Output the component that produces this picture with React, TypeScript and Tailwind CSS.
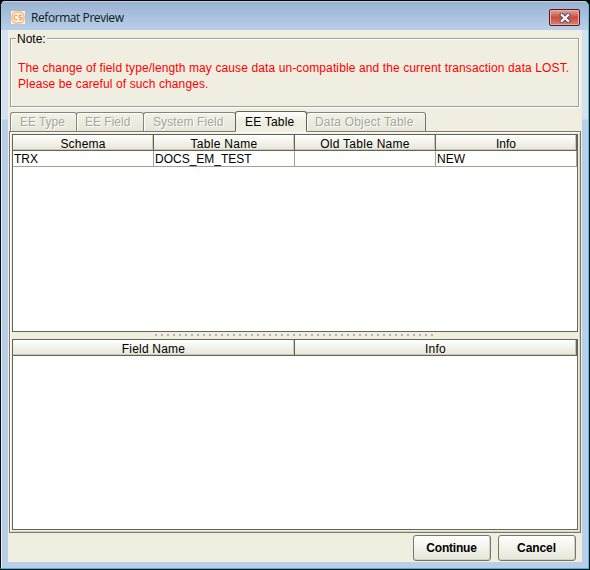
const columns = [
  { name: 'Schema', value: 'TRX', tracking: 'tracking-[0.2px]' },
  { name: 'Table Name', value: 'DOCS_EM_TEST', tracking: 'tracking-[0.3px]' },
  { name: 'Old Table Name', value: '', tracking: 'tracking-[0.26px]' },
  { name: 'Info', value: 'NEW', tracking: 'tracking-[0px]' },
];

const tabs = [
  { name: 'EE Type', size: 'w-[67px] pl-[9px] tracking-[-0.05px]' },
  { name: 'EE Field', size: 'w-[68px] pl-[8px] tracking-[0px]' },
  { name: 'System Field', size: 'w-[93px] pl-[9px] tracking-[0.1px]' },
  { name: 'EE Table', size: 'w-[72px] pl-[9px] tracking-[0.2px]', active: true },
  { name: 'Data Object Table', size: 'w-[120px] pl-[8px] tracking-[0.2px]' },
];

const headerCell =
  'flex h-4 items-center justify-center border-r border-b border-[#656556] bg-linear-to-b from-white to-[#e7e6d8] pt-[2px] shadow-[inset_-1px_-1px_0_#c9c8ba] whitespace-nowrap';

function TitleBar() {
  return (
    <header className="flex h-[28px] shrink-0 items-center bg-linear-to-b from-[#99b3d2] to-[#b9cfe9] pt-[4px] pr-[7px] pl-[10px]">
      <svg width="14" height="13" viewBox="0 0 14 13" className="mt-[-1px]">
        <rect width="14" height="13" fill="#fff4e4" />
        <rect x="1" y="1" width="12" height="11" rx="4.5" fill="none" stroke="#f6b678" strokeWidth="1.4" />
        <path d="M6.3 4.2H4.3L3.2 5.2v2.6l1.1 1h2M11 4.2H8.7L8 5v.9l.7.6h1.6l.7.7v.9l-.7.7H7.8" fill="none" stroke="#ea9345" strokeWidth="1.1" />
      </svg>
      <h1 className="ml-[6px] text-[12px] leading-[14px] tracking-[-0.43px] font-['Open_Sans',sans-serif] text-[#101820]">Reformat Preview</h1>
      <button aria-label="Close" className="mt-[-1px] mr-[1px] ml-auto flex h-[17px] w-[31px] items-center justify-center rounded-[2px] border border-[#501b22] bg-linear-to-b from-[#dfa49a] via-[#c94b39] via-50% to-[#d98274] shadow-[inset_0_0_0_1px_#e8b0a5]">
        <svg width="12" height="10" viewBox="0 0 12 10">
          <path d="M2.8 2l6.4 6M9.2 2L2.8 8" stroke="#4d5266" strokeWidth="4" strokeLinecap="square" />
          <path d="M2.8 2l6.4 6M9.2 2L2.8 8" stroke="#fff" strokeWidth="2.1" strokeLinecap="square" />
        </svg>
      </button>
    </header>
  );
}

function Note() {
  return (
    <section className="relative mt-2 ml-[2px] h-[69px] w-[569px] border border-[#a09f94] pt-[21px] pl-[7px] text-[12px] leading-4 text-[#ff0000] shadow-[1px_1px_0_#fff,inset_1px_1px_0_#fff]">
      <span className="absolute top-[-8px] left-[5px] bg-[#f0eee1] px-[1px] tracking-[0px] text-black">Note:</span>
      <p className="whitespace-nowrap tracking-[0.11px]">The change of field type/length may cause data un-compatible and the current transaction data LOST.</p>
      <p className="whitespace-nowrap tracking-[0.11px]">Please be careful of such changes.</p>
    </section>
  );
}

export default function App() {
  return (
    <div className="h-[570px] w-[590px] bg-black pt-px pr-px pb-px font-['Liberation_Sans',Arial,sans-serif] text-[12px]">
      <div className="flex h-[568px] w-[589px] flex-col overflow-hidden rounded-t-[5px] border-x border-t border-b border-t-[#c3d3e4] border-r-[#25d4ef] border-b-[#16c9e8] border-l-[#111] bg-[#b9cfe9]">
        <TitleBar />
        <div className="min-h-0 flex-1 border-l border-[#e4edf7] bg-linear-to-b from-[#d3e1f1] from-[89px] to-[#b9cfe9] to-[90px] pr-[6px] pb-[6px] pl-[6px]">
          <main className="flex h-[532px] w-[574px] flex-col bg-[#f0eee1]">
            <Note />
            <div className="mt-[4px] ml-[2px] flex h-[20px] items-end" role="tablist">
              {tabs.map((tab) => (
                <div
                  key={tab.name}
                  role="tab"
                  className={`${tab.size} -mr-px shrink-0 rounded-t-[3px] border whitespace-nowrap ${tab.active ? 'relative z-10 mb-[-1px] h-[21px] border-[#656556] border-b-[#f0eee1] bg-linear-to-b from-white to-[#f0eee1] to-50% pt-[3px] leading-[14px] text-black' : 'h-[19px] border-[#85847a] border-b-0 border-r-[#77766a] bg-linear-to-b from-[#f2f1e6] to-[#e6e5d8] pt-[2px] leading-[14px] text-[#a7a69b] shadow-[inset_1px_1px_0_#fff] [text-shadow:1px_1px_0_#fff]'}`}
                >
                  {tab.name}
                </div>
              ))}
            </div>
            <section className="ml-px flex h-[402px] w-[572px] shrink-0 flex-col border border-[#7a7969] bg-[#f0eee1] px-[2px] pt-[2px] pb-[2px] shadow-[inset_1px_1px_0_#fff,inset_-1px_-1px_0_#d5d3c5]">
              <div className="h-[198px] shrink-0 border border-[#656556] bg-white">
                <div className="grid h-4 w-[564px] grid-cols-4">
                  {columns.map((c) => (
                    <div key={c.name} className={`${headerCell} ${c.tracking}`}>{c.name}</div>
                  ))}
                </div>
                <div className="grid h-4 w-[564px] grid-cols-4">
                  {columns.map((c) => (
                    <div key={c.name} className="border-r border-b border-[#a3a298] pt-px pl-px leading-[14px] whitespace-nowrap">{c.value}</div>
                  ))}
                </div>
              </div>
              <div className="flex h-[7px] shrink-0 items-start justify-center pt-[2px]">
                <div className="h-[3px] w-[282px] bg-[radial-gradient(circle_at_2px_1px,#b5b4a8_0.9px,transparent_1.3px)] bg-size-[6px_3px]" />
              </div>
              <div className="min-h-0 flex-1 border border-[#656556] bg-white">
                <div className="grid h-4 w-[564px] grid-cols-2 tracking-[0.2px]">
                  <div className={headerCell}>Field Name</div>
                  <div className={headerCell}>Info</div>
                </div>
              </div>
            </section>
            <footer className="mt-[2px] flex justify-end gap-[7px] pr-[6px] text-[12px] font-bold">
              <button className="h-[26px] w-[78px] rounded-[3px] border border-[#77766a] bg-linear-to-b from-white to-[#e7e6d9] pr-px tracking-[-0.2px] shadow-[inset_-1px_-1px_0_#d2d1c3]">Continue</button>
              <button className="h-[26px] w-[78px] rounded-[3px] border border-[#77766a] bg-linear-to-b from-white to-[#e7e6d9] pr-px tracking-[-0.1px] shadow-[inset_-1px_-1px_0_#d2d1c3]">Cancel</button>
            </footer>
          </main>
        </div>
      </div>
    </div>
  );
}
